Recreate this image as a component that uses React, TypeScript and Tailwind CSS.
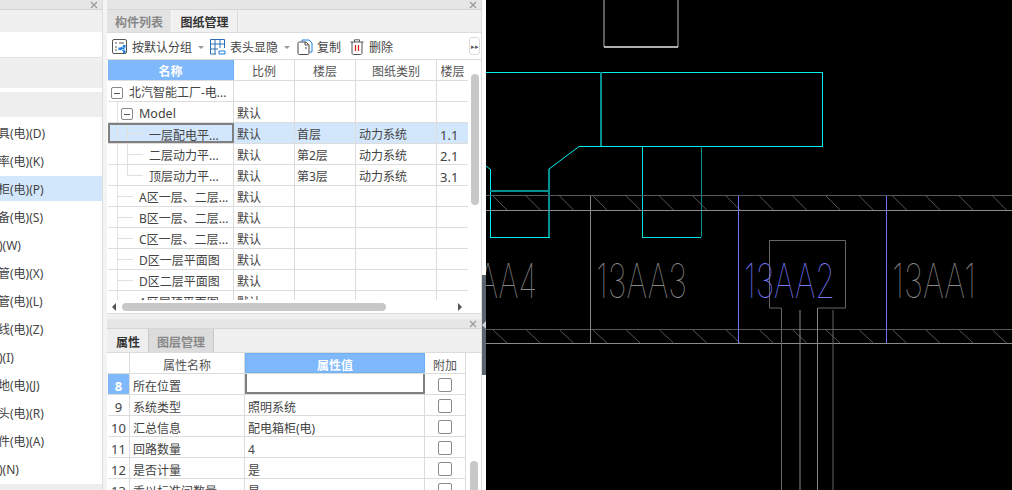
const FONT = 'font-["Noto_Sans","Noto_Sans_CJK_SC",sans-serif]';

const leftRows = [
  { label: '具(电)(D)' },
  { label: '率(电)(K)' },
  { label: '柜(电)(P)', selected: true },
  { label: '备(电)(S)' },
  { label: ')(W)', short: true },
  { label: '管(电)(X)' },
  { label: '管(电)(L)' },
  { label: '线(电)(Z)' },
  { label: ')(I)', short: true },
  { label: '地(电)(J)' },
  { label: '头(电)(R)' },
  { label: '件(电)(A)' },
  { label: ')(N)', short: true },
];

const drawingRows = [
  { name: '北汽智能工厂-电...', level: 0, box: true, scale: '' },
  { name: 'Model', level: 1, box: true, scale: '默认' },
  { name: '一层配电平...', level: 2, scale: '默认', floor: '首层', type: '动力系统', no: '1.1', selected: true },
  { name: '二层动力平...', level: 2, scale: '默认', floor: '第2层', type: '动力系统', no: '2.1' },
  { name: '顶层动力平...', level: 2, scale: '默认', floor: '第3层', type: '动力系统', no: '3.1', last: true },
  { name: 'A区一层、二层...', level: 1, scale: '默认' },
  { name: 'B区一层、二层...', level: 1, scale: '默认' },
  { name: 'C区一层、二层...', level: 1, scale: '默认' },
  { name: 'D区一层平面图', level: 1, scale: '默认' },
  { name: 'D区二层平面图', level: 1, scale: '默认' },
  { name: 'A区层顶平面图', level: 1, scale: '默认' },
];

const propRows = [
  { no: '8', name: '所在位置', value: '', active: true },
  { no: '9', name: '系统类型', value: '照明系统' },
  { no: '10', name: '汇总信息', value: '配电箱柜(电)' },
  { no: '11', name: '回路数量', value: '4' },
  { no: '12', name: '是否计量', value: '是' },
  { no: '13', name: '乘以标准间数量', value: '是' },
];

function CloseX() {
  return (
    <svg width="8" height="8" viewBox="0 0 8 8" className="mr-[4px]">
      <path d="M1 1l6 6M7 1l-6 6" stroke="#9a9a9a" strokeWidth="1.2" />
    </svg>
  );
}

function PanelBar() {
  return (
    <div className="flex h-[10px] items-center justify-end border-b border-[#d6d6d6] bg-[#e6e6e6]">
      <CloseX />
    </div>
  );
}

function GroupIcon() {
  return (
    <svg width="16" height="16" viewBox="0 0 16 16" fill="none">
      <rect x="0.5" y="0.5" width="14" height="14" rx="1.5" stroke="#555" />
      <path d="M3 4h2M7 4h5M3 8h2M3 11h2" stroke="#555" />
      <path d="M8 9.5h4M12 7v6M8 9.5l4-2.5M8 9.5l4 3" stroke="#1f7fe0" />
      <rect x="6.5" y="8.5" width="2.5" height="2.5" fill="#1f7fe0" />
      <rect x="11" y="6" width="2.5" height="2.5" fill="#1f7fe0" />
      <rect x="11" y="11.5" width="2.5" height="2.5" fill="#1f7fe0" />
    </svg>
  );
}

function TableIcon() {
  return (
    <svg width="16" height="16" viewBox="0 0 16 16" fill="none">
      <path d="M6 15H0.5V0.5H14.5V9M0.5 5H14.5M0.5 10H8M5 0.5V15M10 0.5V9" stroke="#2a6fb5" />
      <path d="M9 12h6v3H9z" stroke="#1f7fe0" />
    </svg>
  );
}

function CopyIcon() {
  return (
    <svg width="16" height="16" viewBox="0 0 16 16" fill="none">
      <path d="M5 2.5V1h7l3 3v9h-2" stroke="#1f7fe0" />
      <path d="M1 4.5C1 3.5 1.5 3 2.5 3H9l3 3v8c0 1-.5 1.5-1.500 1.500h-8C1.500 15.500 1 15 1 14z" fill="#fff" stroke="#444" />
      <path d="M8 9h2M8 3v3h3" stroke="#444" />
    </svg>
  );
}

function TrashIcon() {
  return (
    <svg width="14" height="16" viewBox="0 0 14 16" fill="none">
      <path d="M0.500 3h13M4.500 3V0.800h5V3" stroke="#555" />
      <path d="M2 3v11c0 .8.500 1.500 1.500 1.500h7c1 0 1.500-.7 1.500-1.500V3" stroke="#555" />
      <path d="M5.500 6v6M8.500 6v6" stroke="#e01818" strokeWidth="1.200" />
    </svg>
  );
}

function MinusBox() {
  return (
    <span className="relative z-10 flex h-[12px] w-[12px] items-center justify-center rounded-[2px] border border-[#888] bg-white">
      <span className="h-px w-[6px] bg-[#555]" />
    </span>
  );
}

function Cell({ className = '', children }: { className?: string; children?: React.ReactNode }) {
  return (
    <div className={`flex h-full shrink-0 items-center overflow-hidden whitespace-nowrap border-r border-[#dcdcdc] ${className}`}>
      {children}
    </div>
  );
}

function TreeName({ row }: { row: (typeof drawingRows)[number] }) {
  const indent = row.level === 0 ? 'pl-[3px]' : row.level === 1 ? (row.box ? 'pl-[13px]' : 'pl-[31px]') : 'pl-[41px]';
  return (
    <div className={`relative flex h-full items-center pt-[4px] ${indent}`}>
      {row.level > 0 && <span className="absolute left-[9px] top-0 h-full w-px bg-[#e4e4e4]" />}
      {row.level === 1 && !row.box && <span className="absolute left-[9px] top-[10px] h-px w-[16px] bg-[#e0e0e0]" />}
      {row.level === 2 && <span className={`absolute left-[19px] top-0 w-px bg-[#e0e0e0] ${row.last ? 'h-[10px]' : 'h-full'}`} />}
      {row.level === 2 && <span className="absolute left-[19px] top-[10px] h-px w-[16px] bg-[#e0e0e0]" />}
      {row.box && <MinusBox />}
      <span className={`relative ${row.box ? 'ml-[6px]' : ''} ${row.name === 'Model' ? 'text-[12.5px]' : ''}`}>{row.name}</span>
    </div>
  );
}

function DrawingTable() {
  return (
    <div className="h-[240px] w-[360px] overflow-hidden">
      <div className="flex h-[21px] border-b border-[#dcdcdc] text-[#555]">
        <div className="flex h-full w-[126px] items-center justify-center border-r border-[#6fb0f5] bg-[#7fb9fb] pt-[4px] font-bold text-white">名称</div>
        <Cell className="w-[61px] justify-center pt-[4px]">比例</Cell>
        <Cell className="w-[61px] justify-center pt-[4px]">楼层</Cell>
        <Cell className="w-[81px] justify-center pt-[4px]">图纸类别</Cell>
        <div className="flex h-full w-[31px] items-center justify-center whitespace-nowrap pt-[4px]">楼层</div>
      </div>
      {drawingRows.map((row) => (
        <div key={row.name} className={`flex h-[21px] border-b border-[#dcdcdc] text-[#444] ${row.selected ? 'bg-[#d3e7fc]' : 'bg-white'}`}>
          <div className={`h-full w-[126px] shrink-0 overflow-hidden whitespace-nowrap ${row.selected ? 'border-2 border-[#808080]' : 'border-r border-[#dcdcdc]'}`}>
            <div className={row.selected ? '-ml-[2px] -mt-[2px] h-[21px]' : 'h-full'}>
              <TreeName row={row} />
            </div>
          </div>
          <Cell className="w-[61px] pl-[3px] pt-[4px]">{row.scale}</Cell>
          <Cell className="w-[61px] pl-[2px] pt-[4px]">{row.floor}</Cell>
          <Cell className="w-[81px] pl-[3px] pt-[4px]">{row.type}</Cell>
          <div className="flex h-full w-[31px] items-center pl-[3px] pt-[4px] text-[13px]">{row.no}</div>
        </div>
      ))}
    </div>
  );
}

function PropTable() {
  return (
    <div className="w-[358px] overflow-hidden">
      <div className="flex h-[21px] border-b border-[#dcdcdc] text-[#555]">
        <Cell className="w-[22px]" />
        <Cell className="w-[115px] justify-center pt-[6px]">属性名称</Cell>
        <div className="flex h-full w-[180px] shrink-0 items-center justify-center border border-[#6fb0f5] bg-[#7fb9fb] pt-[5px] font-bold text-white">属性值</div>
        <Cell className="w-[41px] justify-center pt-[6px]">附加</Cell>
      </div>
      {propRows.map((row) => (
        <div key={row.no} className="flex h-[21px] border-b border-[#dcdcdc] text-[#444]">
          <Cell className={`w-[22px] justify-center pt-[5px] text-[13px] ${row.active ? 'bg-[#7fb9fb] font-bold text-white' : ''}`}>{row.no}</Cell>
          <Cell className="w-[115px] pl-[3px] pt-[6px]">{row.name}</Cell>
          <div className={`flex h-full w-[180px] shrink-0 items-center pl-[3px] pt-[6px] ${row.active ? 'border-x-2 border-b-2 border-[#808080]' : 'border-r border-[#dcdcdc]'}`}>
            {row.value}
          </div>
          <Cell className="w-[41px] justify-center pt-[2px]">
            <span className="h-[14px] w-[14px] rounded-[2px] border border-[#8a8a8a] bg-white" />
          </Cell>
        </div>
      ))}
    </div>
  );
}

function LeftPanel() {
  return (
    <div className="flex h-full w-[102px] shrink-0 flex-col overflow-hidden bg-white">
      <PanelBar />
      <div className="h-[22px] bg-[#f0f0f0]" />
      <div className="h-[26px] rounded-r-[4px] border-b border-[#e0e0e0] bg-white" />
      <div className="h-[5px] bg-[#f0f0f0]" />
      <div className="h-[25px] bg-[#eeeeee]" />
      <div className="h-[4px] bg-white" />
      <div className="h-[25px] bg-[#eeeeee]" />
      {leftRows.map((row) => (
        <div
          key={row.label}
          className={`mt-[3px] flex h-[25px] shrink-0 items-center whitespace-nowrap pt-[3px] text-[12px] text-[#444] ${row.selected ? 'bg-[#d3e7fc]' : ''}`}
        >
          <span className={row.short ? '-ml-[1px]' : '-ml-[2px]'}>{row.label}</span>
        </div>
      ))}
      <div className="mt-[3px] h-[6px] shrink-0 bg-[#eeeeee]" />
    </div>
  );
}

function MiddlePanel() {
  return (
    <div className="flex h-full w-[375px] shrink-0 flex-col overflow-hidden border-r border-[#dcdcdc] bg-white">
      <PanelBar />
      <div className="flex h-[23px] border-b border-[#dcdcdc] bg-[#f0f0f0] font-bold">
        <div className="flex w-[65px] items-center justify-center border-r border-[#f8f8f8] bg-[#e3e3e3] pt-[4px] text-[#888]">构件列表</div>
        <div className="flex w-[66px] items-center justify-center border-r border-[#dcdcdc] bg-[#f0f0f0] pt-[4px] text-[#333]">图纸管理</div>
      </div>
      <div className="flex h-[27px] shrink-0 items-center border-b border-[#dcdcdc] pl-[5px] pt-[2px] text-[#444]">
        <GroupIcon />
        <span className="ml-[4px] pt-[2px]">按默认分组</span>
        <span className="ml-[6px] mr-[6px] mt-[1px] h-0 w-0 border-x-[3px] border-t-[3px] border-x-transparent border-t-[#999]" />
        <TableIcon />
        <span className="ml-[4px] pt-[2px]">表头显隐</span>
        <span className="ml-[6px] mr-[7px] mt-[1px] h-0 w-0 border-x-[3px] border-t-[3px] border-x-transparent border-t-[#999]" />
        <CopyIcon />
        <span className="ml-[4px] pt-[2px]">复制</span>
        <span className="ml-[9px] flex"><TrashIcon /></span>
        <span className="ml-[5px] pt-[2px]">删除</span>
        <span className="ml-auto mr-[1px] -mt-[2px] flex h-[18px] w-[11px] items-center justify-center rounded-[3px] border border-[#dcdcdc] text-[7px] text-[#555]">▸▸</span>
      </div>
      <div className="flex h-[240px] shrink-0 pl-px">
        <DrawingTable />
        <div className="ml-[3px] w-[8px] pt-[14px]">
          <div className="h-[131px] rounded-full bg-[#c8c8c8]" />
        </div>
      </div>
      <div className="flex h-[14px] shrink-0 items-center border-b border-[#dcdcdc] pl-[5px]">
        <span className="h-0 w-0 border-y-[4px] border-r-[4px] border-y-transparent border-r-[#555]" />
        <div className="ml-[6px] h-[8px] w-[264px] rounded-full bg-[#c8c8c8]" />
        <span className="ml-[72px] h-0 w-0 border-y-[4px] border-l-[4px] border-y-transparent border-l-[#555]" />
      </div>
      <div className="h-[5px] shrink-0 bg-[#f0f0f0]" />
      <PanelBar />
      <div className="flex h-[24px] shrink-0 border-b border-[#dcdcdc] bg-[#f0f0f0] pl-px font-bold">
        <div className="flex w-[41px] items-center justify-center border-r border-[#c8c8c8] bg-[#eeeeee] pt-[4px] text-[#333]">属性</div>
        <div className="flex w-[65px] items-center justify-center border-r border-[#c8c8c8] bg-[#dcdcdc] pt-[4px] text-[#888]">图层管理</div>
      </div>
      <div className="flex flex-1 overflow-hidden pl-px">
        <PropTable />
        <div className="ml-[4px] w-[8px] pt-[108px]">
          <div className="h-[40px] rounded-full bg-[#c8c8c8]" />
        </div>
      </div>
    </div>
  );
}

function Splitter() {
  return (
    <div className="flex h-full w-[4px] shrink-0 flex-col bg-white">
      <div className="h-[275px]" />
      <div className="flex h-[100px] items-center bg-[#5b6570]">
        <span className="h-0 w-0 border-y-[4px] border-r-[4px] border-y-transparent border-r-[#cfd3d8]" />
      </div>
    </div>
  );
}

const hatchX = Array.from({ length: 16 }, (_, i) => 493 + i * 33.3);

function CadLabel({ x, color, text, width }: { x: number; color: string; text: string; width: number }) {
  return (
    <text
      x={x}
      y={298}
      textLength={width}
      lengthAdjust="spacingAndGlyphs"
      fontFamily="'DejaVu Sans ExtraLight', Inter, sans-serif"
      fontWeight={100}
      fontSize={47}
      fill={color}
    >
      {text}
    </text>
  );
}

function CadCanvas() {
  return (
    <div className="h-full min-w-0 flex-1 bg-black">
      <svg width="526" height="490" viewBox="486 0 526 490" fill="none" className="block">
        <path d="M604 0V47H678V0" stroke="#b8b8b8" />
        <path d="M604 47H678" stroke="#ffffff" />

        <g shapeRendering="crispEdges">
          <path d="M486 72.500H822.500V146.500H579M549 169V237.500H490V169" stroke="#00f0f0" />
          <path d="M642.500 146V237.500H701" stroke="#00e0e0" />
          <path d="M601 72V146M490 191H549M701.500 146V237M549 169V237" stroke="#009090" strokeWidth="1.500" />
          <path d="M486 195.500H1012M486 329.500H1012" stroke="#5a5a5a" />
          <path d="M486 210.500H1012M486 343.500H1012" stroke="#8c8c8c" />
        </g>
        <path d="M579 146.500L549 169M490 169L486 166" stroke="#00f0f0" />
        {hatchX.map((x) => (
          <path key={x} d={`M${x} 196L${x + 14} 210M${x} 330L${x + 14} 343`} stroke="#555" />
        ))}
        <path d="M590.500 196V343" stroke="#888" />
        <path d="M738.500 196V343M886.500 196V343" stroke="#7070ff" />

        <path d="M781 308H769.500V240.500H845.500V308H818" stroke="#666" />
        <path d="M781.500 308V490M833 310V490" stroke="#666" />
        <path d="M800 310V490M817.500 308V490" stroke="#888" />

        <CadLabel x={478} color="#8a8a8a" text="AA4" width={59} />
        <CadLabel x={596} color="#8a8a8a" text="13AA3" width={91} />
        <CadLabel x={744} color="#7a7af8" text="13AA2" width={91} />
        <CadLabel x={892} color="#8a8a8a" text="13AA1" width={84} />
      </svg>
    </div>
  );
}

export default function App() {
  return (
    <div className={`flex h-[490px] w-[1012px] overflow-hidden bg-black text-[12px] leading-none ${FONT}`}>
      <LeftPanel />
      <div className="h-full w-[5px] shrink-0 border-l border-[#dcdcdc] bg-[#f4f4f4]" />
      <MiddlePanel />
      <Splitter />
      <CadCanvas />
    </div>
  );
}
